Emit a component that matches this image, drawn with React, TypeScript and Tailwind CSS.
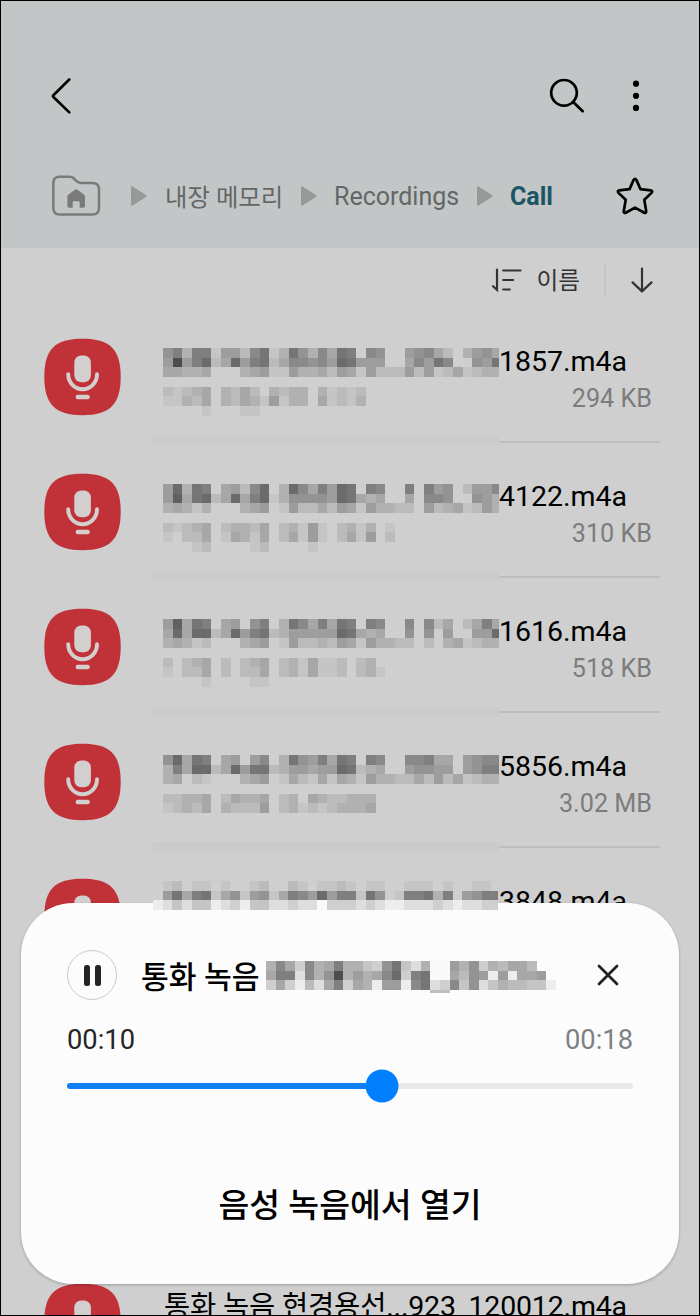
import React from 'react';

const CELL = 9.67;

// One character per tile: 0-d goes from background grey to dark, u/v/w are tiles over white
const shade = (ch: string) => {
  if (ch === 'u') return 222;
  if (ch === 'v') return 237;
  if (ch === 'w') return 249;
  return 207 - parseInt(ch, 16) * 10;
};

type MosaicProps = {
  lines: string[];
  width: number;
  height: number;
  className?: string;
};

const Mosaic: React.FC<MosaicProps> = ({ lines, width, height, className }) => (
  <svg width={width} height={height} className={className} shapeRendering="crispEdges">
    {lines.map((line, row) =>
      line.split('').map((ch, col) => {
        if (ch === '.') return null;
        const v = shade(ch);
        return (
          <rect
            key={`${row}-${col}`}
            x={col * CELL}
            y={row * CELL}
            width={CELL}
            height={CELL}
            fill={`rgb(${v},${v},${v})`}
          />
        );
      })
    )}
  </svg>
);

const recordings = [
  {
    id: 1,
    tail: '1857.m4a',
    size: '294 KB',
    lines: [
      '68388155279139637498.76..56742.3564',
      '5d58a24a5892477675a9555..47597..659',
      '44334...345115334254152225251241233',
      '',
      '21234.3242.3233.31212',
      '11324.324315133.41213',
      '....1...11',
    ],
    pad: 'pt-[40px]',
    band: 'top-[127px]',
  },
  {
    id: 2,
    tail: '4122.m4a',
    size: '310 KB',
    lines: [
      '5a398.4527a.3a7485a9.87..8.856.2557',
      '5b49a24a48a1366665a9434..4.776..653',
      '34313...345.15224254153322.52341253',
      '',
      '21234.23324.23151.2313.1',
      '1.224.14314.24151.2415.2',
      '...12....12....1',
    ],
    pad: 'pt-[41px]',
    band: 'top-[128px]',
  },
  {
    id: 3,
    tail: '1616.m4a',
    size: '518 KB',
    lines: [
      '5b498.45.68.39748498.87..7.724.2484',
      '4a4aa24a5892355555a9434..6.6.5..55a',
      '34312...345.15223254153322.2.341233',
      '',
      '2.234.2.234.2314112.23',
      '1.224.2.224.2314112.231',
      '...01....11....0',
    ],
    pad: 'pt-[41px]',
    band: 'top-[129px]',
  },
  {
    id: 4,
    tail: '5856.m4a',
    size: '3.02 MB',
    lines: [
      '6a498.45.57.39658498.87..77844.5677',
      '384aa24a5992355455a9234..56655.5688',
      '34.21...345.14214143153322425241233',
      '',
      '22334.24334.23.4322333',
      '12324.32225.2312123334',
    ],
    pad: 'pt-[42px]',
    band: 'top-[129px]',
  },
];

const coveredLines = [
  '.12.11.1..12..21.1121.11..111.1..11',
  '.5948914615614875a588196.188938.5688',
  'vu1u11vu0v11uu0uuw000u0uvvuuu0uvuu00',
];

const titleLines = [
  '374073483310691u3ww536032442',
  '488u736d35347a089ww4265v5v445',
  '040v2u48043v55v79u0716u132211v',
];

const BackIcon = () => (
  <svg width="24" height="40" viewBox="0 0 24 40" fill="none" stroke="#000" strokeWidth="2.6" strokeLinecap="round" strokeLinejoin="round">
    <path d="M19.3 3.5L3.4 19.2q-.9.9 0 1.8L19.3 36.4" />
  </svg>
);

const SearchIcon = () => (
  <svg width="40" height="40" viewBox="0 0 40 40" fill="none" stroke="#000" strokeWidth="2.7" strokeLinecap="round">
    <circle cx="17" cy="16.8" r="12.8" />
    <path d="M26.2 26L35.7 35.3" />
  </svg>
);

const MoreIcon = () => (
  <svg width="8" height="40" viewBox="0 0 8 40" fill="#000">
    <circle cx="4" cy="7.7" r="3.1" />
    <circle cx="4" cy="19.8" r="3.1" />
    <circle cx="4" cy="31.9" r="3.1" />
  </svg>
);

const HomeFolderIcon = () => (
  <svg width="50" height="42" viewBox="0 0 50 42" fill="none">
    <path
      d="M2.3 8.2Q2.3 1.7 8.8 1.7H18.6Q21.2 1.7 23 3.5L25.3 5.9Q27.4 8 30.2 8H41.5Q48 8 48 14.5V32.9Q48 39.4 41.5 39.4H8.8Q2.3 39.4 2.3 32.9Z"
      stroke="#7b7b7b"
      strokeWidth="2.5"
    />
    <path
      d="M24.2 14.6Q25.2 13.7 26.2 14.6L33.2 19.8Q34 20.5 34 21.6V30.2Q34 32.8 31.4 32.8H28.7V27.5Q28.7 26.3 27.5 26.3H22.9Q21.7 26.3 21.7 27.5V32.8H19Q16.4 32.8 16.4 30.2V21.6Q16.4 20.5 17.2 19.8Z"
      fill="#7b7b7b"
    />
  </svg>
);

const Triangle = () => (
  <svg width="16" height="20" viewBox="0 0 16 20" className="shrink-0">
    <path d="M0 1.2Q0-.5 1.6.4L15 9Q16.3 10 15 11L1.6 19.6Q0 20.5 0 18.8Z" fill="#979999" />
  </svg>
);

const StarIcon = () => (
  <svg width="38" height="38" viewBox="0 0 38 38" fill="none" stroke="#000" strokeWidth="2.7" strokeLinejoin="round">
    <path d="M17.6 2.9Q19 .8 20.4 2.9L24.4 12.1L34.7 13.3Q37.2 13.9 35.5 15.9L28.3 22.8L30.2 34.2Q30.3 36.6 28.2 35.8L19 30.6L9.8 35.8Q7.7 36.6 7.8 34.2L9.7 22.8L2.5 15.9Q.8 13.9 3.3 13.3L13.6 12.1Z" />
  </svg>
);

const SortIcon = () => (
  <svg width="32" height="24" viewBox="0 0 32 24" fill="none" stroke="#333" strokeWidth="2.2" strokeLinecap="round">
    <path d="M6 1.5V21.8L2 18.2M12.2 2.5H29.5M12.2 12H22.2M12.2 21.5H18.8" />
  </svg>
);

const DownIcon = () => (
  <svg width="22" height="26" viewBox="0 0 22 26" fill="none" stroke="#333" strokeWidth="2.2" strokeLinecap="round" strokeLinejoin="round">
    <path d="M11 1.5V24.2M1.5 15.4L11 24.4L20.5 15.4" />
  </svg>
);

const RecorderIcon = () => (
  <svg width="77" height="78" viewBox="0 0 77 78" className="shrink-0">
    <path d="M38.5.8C66 .8 76.7 11.3 76.7 38.8S66 77.2 38.5 77.2 .3 66.3 .3 38.8 11 .8 38.5 .8Z" fill="#c03238" />
    <rect x="30.3" y="17.4" width="16.6" height="26.8" rx="7" fill="#d3cfcf" />
    <path d="M24.2 36.3A14.4 15 0 0 0 53 36.3" fill="none" stroke="#d3cfcf" strokeWidth="3.9" strokeLinecap="round" />
    <rect x="31.7" y="56.8" width="14" height="4.4" rx="2" fill="#d3cfcf" />
  </svg>
);

export default function App() {
  const progress = 55.7;

  return (
    <div className="relative h-[1316px] w-[700px] overflow-hidden border border-black bg-[#cfcfcf] font-[Roboto,'Noto_Sans_CJK_KR',sans-serif] text-black">
      {/* Header */}
      <header className="h-[247px] bg-[#c2c6c7] pt-[75px]">
        <div className="flex items-center pr-[59px] pl-[49px]">
          <BackIcon />
          <div className="ml-auto flex items-center gap-[45px]">
            <SearchIcon />
            <MoreIcon />
          </div>
        </div>

        <div className="mt-[56px] flex h-12 items-center pl-[50px] text-[25.2px] whitespace-nowrap text-[#646666]">
          <HomeFolderIcon />
          <div className="ml-[30px] flex items-center">
            <Triangle />
            <span className="ml-[18px] w-[136px] pt-[4px] text-[24.4px]">내장 메모리</span>
            <Triangle />
            <span className="ml-[17px] w-[143px] pt-[2px] text-[25px]">Recordings</span>
            <Triangle />
            <span className="ml-[17px] w-[106px] pt-[2px] text-[25px] font-bold text-[#1a5566]">Call</span>
          </div>
          <StarIcon />
        </div>
      </header>

      {/* Sort bar */}
      <div className="flex h-[60px] items-center justify-end pt-1 pr-[46px]">
        <SortIcon />
        <span className="ml-[13px] pt-[4px] text-[23.7px] text-[#333]">이름</span>
        <span className="ml-[24px] h-[31px] w-[2px] bg-[#c4c4c4]" />
        <span className="ml-[25px]">
          <DownIcon />
        </span>
      </div>

      {/* Recordings */}
      <ul>
        {recordings.map((rec) => (
          <li key={rec.id} className="relative flex h-[135px] pl-[43px]">
            <div className="pt-[30px]">
              <RecorderIcon />
            </div>
            <div className={`ml-[42px] w-[336px] shrink-0 ${rec.pad}`}>
              <Mosaic lines={rec.lines} width={335.7} height={70} />
            </div>
            <span className={`absolute left-[152px] h-[10px] w-[346px] bg-[#cbcbcb] ${rec.band}`} />
            <div className="h-full w-[161px] border-b-2 border-[#bdbdbd] pt-[36px]">
              <p className="text-[28.5px] leading-[36px]">{rec.tail}</p>
              <p className="pr-[8px] text-right text-[25.2px] leading-[37px] text-[#7c7c7c]">{rec.size}</p>
            </div>
          </li>
        ))}
        <li className="flex h-[135px] pl-[43px]">
          <div className="pt-[30px]">
            <RecorderIcon />
          </div>
          <p className="ml-[378px] pt-[36px] text-[28.5px] leading-[36px]">3848.m4a</p>
        </li>
        <li className="h-[270px]" />
        <li className="flex h-[135px] pl-[43px]">
          <div className="pt-[30px]">
            <RecorderIcon />
          </div>
          <p className="ml-[43px] pt-[36px] text-[28.5px] leading-[36px] tracking-[-0.17px] whitespace-nowrap">
            통화 녹음 현경용선...923_120012.m4a
          </p>
        </li>
      </ul>

      {/* Player sheet */}
      <section className="absolute top-[902px] left-[20px] h-[381px] w-[658px] rounded-[52px] bg-[#fcfcfc] shadow-[0_1px_3px_rgba(0,0,0,0.25)]">
        <div className="mt-[47px] flex h-[50px] items-center pl-[46px]">
          <button className="flex h-[50px] w-[50px] items-center justify-center gap-[5px] rounded-full border border-[#cacaca]">
            <span className="h-[21px] w-[6px] rounded-[2.5px] bg-[#222526]" />
            <span className="h-[21px] w-[6px] rounded-[2.5px] bg-[#222526]" />
          </button>
          <span className="ml-[24px] w-[125px] pt-[5px] text-[30.2px] font-medium whitespace-nowrap">통화 녹음</span>
          <div className="relative h-[29px] w-[290px]">
            <Mosaic lines={titleLines} width={290} height={29} />
            <span className="absolute top-[29px] left-[164px] h-[3px] w-[20px] bg-[#bfbfbf]" />
          </div>
          <svg width="22" height="22" viewBox="0 0 22 22" className="ml-[41px]" stroke="#222" strokeWidth="2.8" strokeLinecap="round">
            <path d="M2 2L20 20M20 2L2 20" />
          </svg>
        </div>

        <div className="mt-[21px] flex justify-between px-[46px] text-[27.3px] leading-[38px]">
          <span className="text-[#252525]">00:10</span>
          <span className="text-[#7d8186]">00:18</span>
        </div>

        <div className="mt-[10px] flex h-[33px] items-center px-[46px]">
          <div className="relative h-[6px] w-full rounded-full bg-[#e9e9e9]">
            <div className="h-full rounded-full bg-[#0f7ff5]" style={{ width: `${progress}%` }} />
            <span
              className="absolute top-1/2 h-[33px] w-[33px] -translate-x-1/2 -translate-y-1/2 rounded-full bg-[#0080ff]"
              style={{ left: `${progress}%` }}
            />
          </div>
        </div>

        <p className="mt-[82px] text-center text-[33.5px] leading-[44px] font-medium">음성 녹음에서 열기</p>
      </section>

      {/* Name of the recording partly under the sheet */}
      <Mosaic lines={coveredLines} width={345.4} height={29} className="absolute top-[880px] left-[152px]" />
    </div>
  );
}
